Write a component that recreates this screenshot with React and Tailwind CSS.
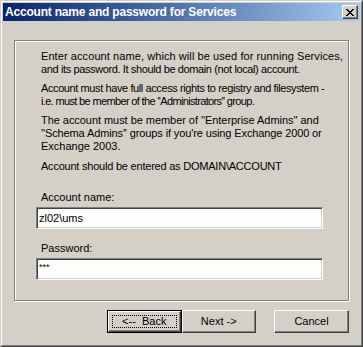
import React from 'react';

const sunken =
  'border border-t-[#808080] border-l-[#808080] border-r-white border-b-white shadow-[inset_1px_1px_0_#404040,inset_-1px_-1px_0_#d4d0c8]';

const raised =
  'border border-t-white border-l-white border-r-[#404040] border-b-[#404040] shadow-[inset_-1px_-1px_0_#808080]';

function Field({ label, value, small }) {
  return (
    <div className="flex flex-col">
      <div className="pl-[26px] h-[13px] leading-[13px]">{label}</div>
      <div
        className={`${sunken} ml-[21px] mt-[3px] w-[287px] h-[22px] bg-[#fcfefc] flex px-[2px] ${small ? 'text-[9px] items-start pt-[2px]' : 'items-center'}`}
      >
        {value}
      </div>
    </div>
  );
}

function Button({ children, isDefault }) {
  if (isDefault) {
    return (
      <div className="w-[75px] h-[23px] border border-black">
        <div className={`${raised} w-full h-full flex items-center justify-center p-[3px]`}>
          <div className="w-full h-full border border-dotted border-black flex items-center justify-center">
            {children}
          </div>
        </div>
      </div>
    );
  }
  return (
    <div className={`${raised} w-[75px] h-[23px] flex items-center justify-center`}>
      {children}
    </div>
  );
}

export default function App() {
  return (
    <div
      className="w-[363px] h-[347px] bg-[#d4d0c8] border border-t-[#d4d0c8] border-l-[#d4d0c8] border-r-[#404040] border-b-[#404040] text-black text-[11px] leading-[13px]"
      style={{ fontFamily: '"Liberation Sans", Arial, sans-serif' }}
    >
      <div className="w-full h-full border border-t-white border-l-white border-r-[#808080] border-b-[#808080] p-[1px] flex flex-col">
        {/* Title bar */}
        <div className="h-[18px] bg-gradient-to-r from-[#0a246a] to-[#a6caf0] flex items-center pl-[2px] pr-[2px]">
          <span className="text-white font-bold text-[12px] tracking-[-0.2px] leading-[18px] whitespace-nowrap">
            Account name and password for Services
          </span>
          <div className={`${raised} ml-auto w-[16px] h-[14px] bg-[#d4d0c8] flex items-center justify-center`}>
            <svg width="8" height="7" viewBox="0 0 8 7" shapeRendering="crispEdges">
              <path
                d="M0 0h2v1H0zM6 0h2v1H6zM1 1h2v1H1zM5 1h2v1H5zM2 2h4v1H2zM3 3h2v1H3zM2 4h4v1H2zM1 5h2v1H1zM5 5h2v1H5zM0 6h2v1H0zM6 6h2v1H6z"
                fill="#000"
              />
            </svg>
          </div>
        </div>

        {/* Body */}
        <div className="flex-1 flex flex-col px-[11px] pt-[19px]">
          <div className="w-[335px] h-[261px] border border-[#808080] shadow-[inset_1px_1px_0_#fff,1px_1px_0_#fff] pt-[9px]">
            <div className="pl-[26px] whitespace-nowrap">
              <p className="mb-[6px]">
                <span className="tracking-[0.08px]">Enter account name, which will be used for running Services,</span>
                <br />
                <span className="tracking-[-0.38px]">and its password. It should be domain (not local) account.</span>
              </p>
              <p className="mb-[6px]">
                <span className="tracking-[-0.4px]">Account must have full access rights to registry and filesystem -</span>
                <br />
                <span className="tracking-[-0.65px]">i.e. must be member of the ''Administrators'' group.</span>
              </p>
              <p className="mb-[7px]">
                <span className="tracking-[-0.05px]">The account must be member of ''Enterprise Admins'' and</span>
                <br />
                <span className="tracking-[-0.12px]">''Schema Admins'' groups if you're using Exchange 2000 or</span>
                <br />
                Exchange 2003.
              </p>
              <p className="tracking-[-0.22px]">Account should be entered as DOMAIN\ACCOUNT</p>
            </div>

            <div className="mt-[18px]">
              <Field label="Account name:" value="zl02\ums" />
            </div>
            <div className="mt-[13px]">
              <Field label="Password:" value="***" small />
            </div>
          </div>

          <div className="flex mt-[9px] pl-[93px]">
            <Button isDefault>{'<--\u00a0\u00a0Back'}</Button>
            <Button>Next -&gt;</Button>
            <div className="ml-[18px]">
              <Button>Cancel</Button>
            </div>
          </div>
        </div>
      </div>
    </div>
  );
}
